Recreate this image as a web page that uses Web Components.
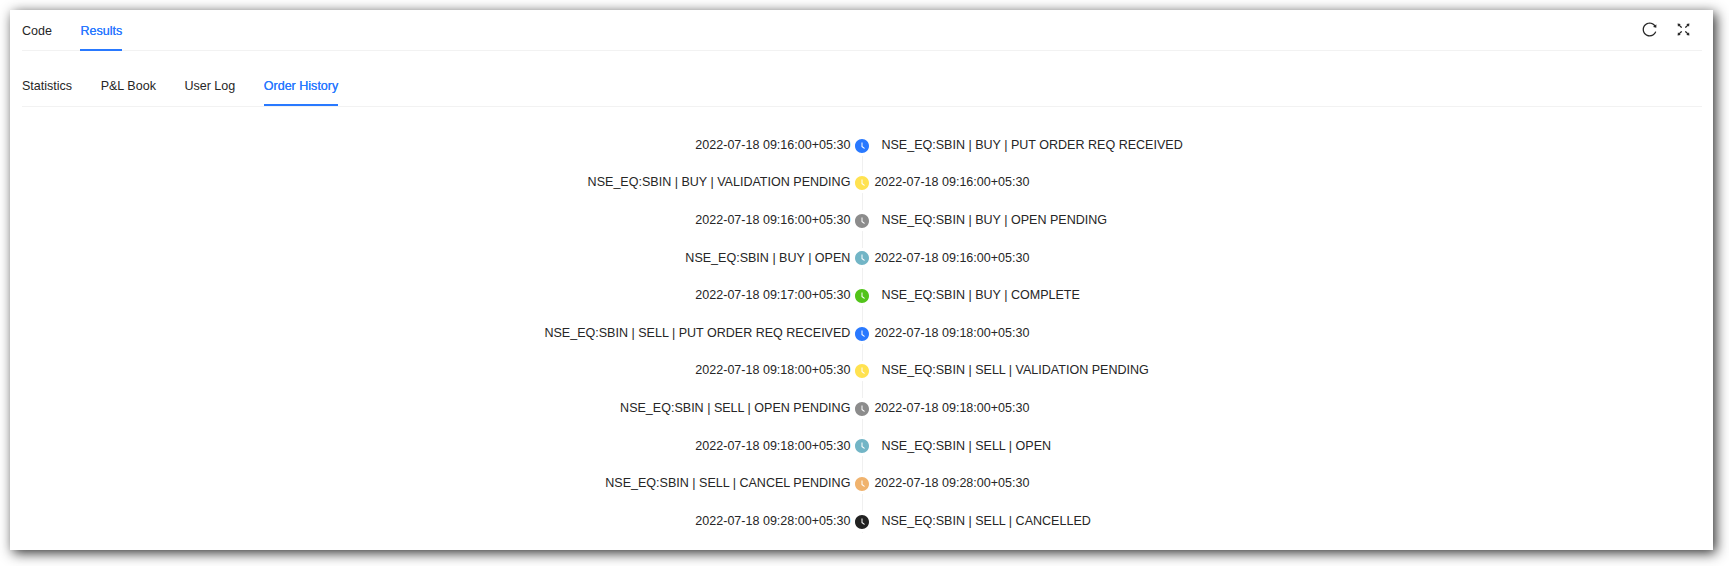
<!DOCTYPE html>
<html lang="en">
<head>
<meta charset="utf-8">
<title>Order History</title>
<style>
body { margin: 0; display: flow-root; height: 566px; background: #fff; font: 12.54px/20px "Liberation Sans", Arial, sans-serif; color: #262626; }
</style>
</head>
<body>
<result-panel>
  <tab-bar style="--h:40px;--pt:8px;--ink:-1px">
    <tab-item>Code</tab-item><tab-item active>Results</tab-item>
    <tool-icon slot="extra" name="reload"></tool-icon><tool-icon slot="extra" name="fullscreen"></tool-icon>
  </tab-bar>
  <tab-bar style="--h:55px;--pt:22px;--ink:0px">
    <tab-item>Statistics</tab-item><tab-item>P&amp;L Book</tab-item><tab-item>User Log</tab-item><tab-item active>Order History</tab-item>
  </tab-bar>
  <order-timeline></order-timeline>
</result-panel>
<script>
const ICONS = {
  reload: 'M909.1 209.3l-56.4 44.1C775.8 155.1 656.2 92 521.9 92 290 92 102.3 279.5 102 511.5 101.7 743.7 289.8 932 521.9 932c181.3 0 335.8-115 394.6-276.1 1.5-4.2-.7-8.9-4.9-10.3l-56.7-19.5a8 8 0 00-10.1 4.8c-1.8 5-3.8 10-5.9 14.9-17.3 41-42.1 77.8-73.7 109.4A344.77 344.77 0 01655.9 829c-42.3 17.9-87.4 27-133.8 27-46.5 0-91.5-9.1-133.8-27A341.5 341.5 0 01279 755.2a342.16 342.16 0 01-73.7-109.4c-17.9-42.4-27-87.4-27-133.9s9.1-91.5 27-133.9c17.3-41 42.1-77.8 73.7-109.4 31.6-31.6 68.4-56.4 109.3-73.8 42.3-17.9 87.4-27 133.8-27 46.5 0 91.5 9.1 133.8 27a341.5 341.5 0 01109.3 73.8c9.9 9.9 19.2 20.4 27.8 31.4l-60.2 47a8 8 0 003 14.1l175.6 43c5 1.2 9.9-2.6 9.9-7.7l.8-180.9c-.1-6.6-7.8-10.3-13-6.2z',
  fullscreen: 'M290 236.4l43.9-43.9a8.01 8.01 0 00-4.7-13.6L169 160c-5.1-.6-9.5 3.7-8.9 8.9L179 329.1c.8 6.6 8.9 9.4 13.6 4.7l43.7-43.7L370 423.7c3.1 3.1 8.2 3.1 11.3 0l42.4-42.3c3.1-3.1 3.1-8.2 0-11.3L290 236.4zm352.7 187.3c3.1 3.1 8.2 3.1 11.3 0l133.7-133.6 43.7 43.7a8.01 8.01 0 0013.6-4.7L863.9 169c.6-5.1-3.7-9.5-8.9-8.9L694.8 179c-6.6.8-9.4 8.9-4.7 13.6l43.9 43.9L600.3 370a8.03 8.03 0 000 11.3l42.4 42.4zM845 694.9c-.8-6.6-8.9-9.4-13.6-4.7l-43.7 43.7L654 600.3a8.03 8.03 0 00-11.3 0l-42.4 42.3a8.03 8.03 0 000 11.3L734 787.6l-43.9 43.9a8.01 8.01 0 004.7 13.6L855 864c5.1.6 9.5-3.7 8.9-8.9L845 694.9zm-463.7-94.6a8.03 8.03 0 00-11.3 0L236.3 733.9l-43.7-43.7a8.01 8.01 0 00-13.6 4.7L160.1 855c-.6 5.1 3.7 9.5 8.9 8.9L329.2 845c6.6-.8 9.4-8.9 4.7-13.6L290 787.6 423.7 654c3.1-3.1 3.1-8.2 0-11.3l-42.4-42.4z',
  clock: 'M512 64C264.6 64 64 264.6 64 512s200.6 448 448 448 448-200.6 448-448S759.4 64 512 64zm176.5 585.7l-28.6 39a7.99 7.99 0 01-11.2 1.7L483.3 569.8a7.92 7.92 0 01-3.3-6.5V288c0-4.4 3.6-8 8-8h48.1c4.4 0 8 3.6 8 8v247.5l142.8 103.1c3.5 2.6 4.2 7.6 1.6 11.1z'
};

function define(name, render) {
  customElements.define(name, class extends HTMLElement {
    constructor() { super(); this.attachShadow({ mode: 'open' }); }
    connectedCallback() { this.shadowRoot.innerHTML = render(this); }
  });
}

define('result-panel', () => `<style>
  :host { display: block; box-sizing: border-box; width: 1703px; height: 540px; margin: 10px; padding: 0 11px 0 12px;
    background: #fff; box-shadow: 3px 3px 12px rgba(0,0,0,.82); }
</style><slot></slot>`);

define('tab-bar', () => `<style>
  :host { display: flex; box-sizing: content-box; height: var(--h); border-bottom: 1px solid #f2f2f2; }
  nav { display: flex; gap: 28.5px; flex: 1; }
  .extra { display: flex; gap: 19px; align-items: center; padding-right: 11px; padding-bottom: 1px; }
</style><nav><slot></slot></nav><div class="extra"><slot name="extra"></slot></div>`);

define('tab-item', () => `<style>
  :host { display: block; position: relative; box-sizing: border-box; height: 100%; padding-top: calc(var(--pt) + 3px); white-space: nowrap; }
  :host([active]) { color: #2979ff; text-shadow: 0 0 .25px currentColor; }
  :host([active])::after { content: ""; position: absolute; left: 0; right: 0; bottom: var(--ink); height: 2px; background: #2979ff; }
</style><slot></slot>`);

define('tool-icon', el => `<style>
  :host { display: block; width: 15px; height: 15px; }
  svg { display: block; width: 100%; height: 100%; }
</style><svg viewBox="64 64 896 896" fill="currentColor"><path d="${ICONS[el.getAttribute('name')]}"/></svg>`);

define('order-event', el => `<style>
  :host { display: grid; grid-template-columns: 828.4px 24px 1fr; height: 37.6px; white-space: pre; }
  .left { text-align: right; }
  .mark { display: flex; flex-direction: column; align-items: center; padding-top: 3.85px; }
  tool-icon { width: 14px; height: 14px; color: ${el.dataset.color}; flex: none; }
  .tail { width: 1px; margin: 3px 0 0 1px; background: #f0f0f0; height: ${el.hasAttribute('last') ? 1 : 17}px; }
  .right { padding-left: ${el.hasAttribute('flip') ? 0 : 7}px; }
</style><span class="left">${el.dataset.left}</span><span class="mark"><tool-icon name="clock"></tool-icon><i class="tail"></i></span><span class="right">${el.dataset.right}</span>`);

const EVENTS = [
  ['09:16', 'BUY | PUT ORDER REQ RECEIVED', '#2979ff'],
  ['09:16', 'BUY | VALIDATION PENDING', '#ffe250'],
  ['09:16', 'BUY | OPEN PENDING', '#8c8c8c'],
  ['09:16', 'BUY | OPEN', '#72b5c6'],
  ['09:17', 'BUY | COMPLETE', '#52c41a'],
  ['09:18', 'SELL | PUT ORDER REQ RECEIVED', '#2979ff'],
  ['09:18', 'SELL | VALIDATION PENDING', '#ffe250'],
  ['09:18', 'SELL | OPEN PENDING', '#8c8c8c'],
  ['09:18', 'SELL | OPEN', '#72b5c6'],
  ['09:28', 'SELL | CANCEL PENDING', '#f0b36e'],
  ['09:28', 'SELL | CANCELLED', '#222']
];
define('order-timeline', () => `<style>:host { display: block; padding-top: 27.75px; }</style>` +
  EVENTS.map(([time, text, color], i) => {
    const pair = [`2022-07-18 ${time}:00+05:30`, `NSE_EQ:SBIN | ${text}`];
    if (i % 2) pair.reverse();
    return `<order-event data-left="${pair[0]}" data-right="${pair[1]}" data-color="${color}"${i % 2 ? ' flip' : ''}${i === EVENTS.length - 1 ? ' last' : ''}></order-event>`;
  }).join(''));
</script>
</body>
</html>
